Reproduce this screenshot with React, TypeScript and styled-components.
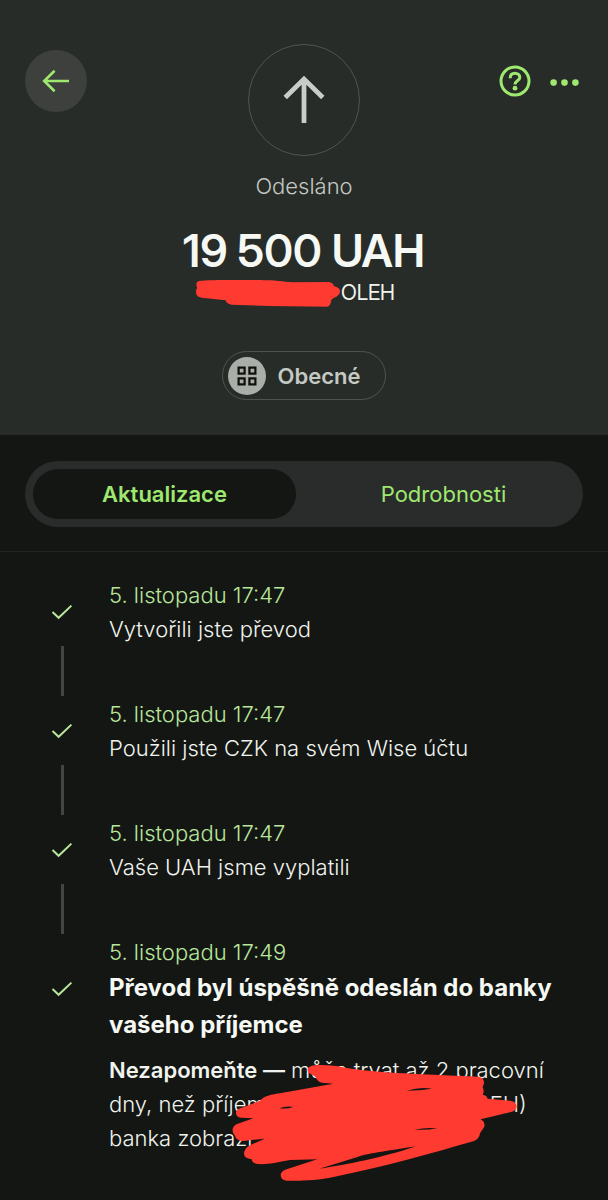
import React, { useState } from "react";
import styled, { createGlobalStyle } from "styled-components";

const color = {
  page: "#141613",
  header: "#282c28",
  accent: "#9fe870",
  date: "#b8e69c",
  text: "#f0f3ee",
  strong: "#f6f8f4",
  muted: "#c4c9c3",
  outline: "#505450",
  marker: "#ff3a31",
};

const displayFont = `"Inter Display", Inter, "Liberation Sans", sans-serif`;

const GlobalStyle = createGlobalStyle`
  *, *::before, *::after { box-sizing: border-box; }
  html { background: ${color.page}; }
  body {
    margin: 0;
    font-family: Inter, "Liberation Sans", sans-serif;
    font-size: 22px;
    font-weight: 300;
    line-height: 34px;
    color: ${color.text};
  }
  button { font: inherit; color: inherit; border: 0; padding: 0; background: none; cursor: pointer; }
  h1, h2, p, ol { margin: 0; padding: 0; }
  svg { display: block; }
`;

const Page = styled.main`
  min-height: 100vh;
  background: ${color.page};
`;

const Header = styled.header`
  display: flex;
  flex-direction: column;
  align-items: center;
  padding: 44px 25px 35px;
  background: ${color.header};
`;

const TopBar = styled.div`
  display: grid;
  grid-template-columns: 1fr auto 1fr;
  align-items: start;
  width: 100%;
`;

const BackButton = styled.button`
  display: grid;
  place-items: center;
  width: 62px;
  height: 62px;
  margin-top: 6px;
  border-radius: 50%;
  background: #3d403d;
`;

const Direction = styled.div`
  display: grid;
  place-items: center;
  width: 112px;
  height: 112px;
  border: 1px solid ${color.outline};
  border-radius: 50%;
`;

const Actions = styled.div`
  display: flex;
  align-items: center;
  justify-content: flex-end;
  gap: 14px;
  height: 62px;
  margin-top: 6px;
`;

const IconButton = styled.button`
  display: grid;
  place-items: center;
  width: 36px;
  height: 36px;
`;

const Status = styled.p`
  margin-top: 13px;
  color: ${color.muted};
`;

const Amount = styled.h1`
  margin-top: 19px;
  font-family: ${displayFont};
  font-size: 45px;
  line-height: 58px;
  font-weight: 600;
  color: ${color.strong};
`;

const Recipient = styled.p`
  position: relative;
  width: 182px;
  font-family: ${displayFont};
  font-size: 21px;
  font-weight: 400;
  line-height: 26px;
  text-align: right;
`;

const NameMark = styled.svg`
  position: absolute;
  left: -18px;
  top: -1px;
`;

const Category = styled.button`
  display: flex;
  align-items: center;
  gap: 12px;
  height: 49px;
  margin-top: 45px;
  padding: 0 25px 0 5px;
  border: 1px solid ${color.outline};
  border-radius: 25px;
  font-weight: 600;
  color: ${color.muted};
`;

const CategoryIcon = styled.span`
  display: grid;
  place-items: center;
  width: 38px;
  height: 38px;
  border-radius: 50%;
  background: #a9afa8;
`;

const TabBar = styled.div`
  padding: 26px 25px 24px;
  border-bottom: 1px solid #222422;
`;

const Tabs = styled.div`
  display: grid;
  grid-template-columns: 1fr 1fr;
  gap: 16px;
  padding: 8px;
  border-radius: 33px;
  background: #2a2c2b;
`;

const Tab = styled.button<{ $active: boolean }>`
  height: 50px;
  border-radius: 25px;
  background: ${(p) => (p.$active ? color.page : "transparent")};
  color: ${color.accent};
  font-weight: ${(p) => (p.$active ? 600 : 400)};
`;

const Timeline = styled.ol`
  padding: 26px 24px 44px;
  list-style: none;
`;

const Step = styled.li`
  display: grid;
  grid-template-columns: 76px 1fr;
  column-gap: 9px;
`;

const StepIcon = styled.span`
  display: grid;
  place-items: center;
`;

const StepDate = styled.p`
  color: ${color.date};
`;

const Connector = styled.span`
  grid-column: 1;
  justify-self: center;
  width: 3px;
  height: 50px;
  margin-bottom: 1px;
  background: #424542;
`;

const StepTitle = styled.h2`
  font-size: 24px;
  line-height: 37px;
  font-weight: 700;
  color: ${color.strong};
`;

const Note = styled.p`
  position: relative;
  grid-column: 2;
  margin-top: 10px;
  white-space: nowrap;
`;

const Strong = styled.strong`
  font-weight: 600;
`;

const Redacted = styled.span`
  display: inline-block;
  width: 195px;
`;

const NoteMark = styled.svg`
  position: absolute;
  left: 121px;
  top: 10px;
`;

const steps = [
  { date: "5. listopadu 17:47", text: "Vytvořili jste převod" },
  { date: "5. listopadu 17:47", text: "Použili jste CZK na svém Wise účtu" },
  { date: "5. listopadu 17:47", text: "Vaše UAH jsme vyplatili" },
];

const Check = () => (
  <StepIcon>
    <svg width="22" height="16" viewBox="0 0 22 16" fill="none" stroke={color.date} strokeWidth="2" aria-hidden="true">
      <path d="M1.5 8 L7.6 13.8 L20.4 1.6" />
    </svg>
  </StepIcon>
);

export default function App() {
  const [tab, setTab] = useState(0);
  return (
    <Page>
      <GlobalStyle />
      <Header>
        <TopBar>
          <BackButton aria-label="Zpět">
            <svg width="28" height="24" viewBox="0 0 28 24" fill="none" stroke={color.accent} strokeWidth="2.6">
              <path d="M27 12 H2.5 M12.6 1.8 L2.2 12 L12.6 22.2" />
            </svg>
          </BackButton>
          <Direction>
            <svg width="42" height="50" viewBox="0 0 42 50" fill="none" stroke="#c9ccc8" strokeWidth="4.8" aria-hidden="true">
              <path d="M21 48 V4 M2.2 22.5 L21 4 L39.8 22.5" />
            </svg>
          </Direction>
          <Actions>
            <IconButton aria-label="Nápověda">
              <svg width="32" height="32" viewBox="0 0 32 32" fill="none" stroke={color.accent} strokeWidth="3">
                <circle cx="16" cy="16" r="14" />
                <path d="M11.2 13.2 C11.2 10 13.2 8.3 16 8.3 C18.8 8.3 20.8 10 20.8 12.4 C20.8 15.6 16 15.4 16 19.6" />
                <circle cx="16" cy="23.2" r="2.4" fill={color.accent} stroke="none" />
              </svg>
            </IconButton>
            <IconButton aria-label="Další možnosti">
              <svg width="30" height="10" viewBox="0 0 30 10" fill={color.accent}>
                <circle cx="3.6" cy="6.6" r="3.3" />
                <circle cx="14.5" cy="6.6" r="3.3" />
                <circle cx="25.4" cy="6.6" r="3.3" />
              </svg>
            </IconButton>
          </Actions>
        </TopBar>
        <Status>Odesláno</Status>
        <Amount>19 500 UAH</Amount>
        <Recipient>
          OLEH
          <NameMark width="146" height="29" viewBox="105 190 438 87" fill={color.marker} aria-hidden="true">
            <path d="M118 196 C150 191 300 193 330 194 C370 197 390 200 400 200 L508 199 Q520 202 522 212 Q540 215 540 228 Q538 240 522 246 L514 252 Q512 272 500 273 L330 271 L215 267 Q200 265 197 254 L125 246 Q108 244 108 230 Q107 222 112 217 Q104 200 118 196 Z" />
          </NameMark>
        </Recipient>
        <Category>
          <CategoryIcon>
            <svg width="20" height="20" viewBox="0 0 20 20" fill="none" stroke="#0e0f0c" strokeWidth="2.2" aria-hidden="true">
              <rect x="1.6" y="1.6" width="6" height="6" />
              <rect x="12.4" y="1.6" width="6" height="6" />
              <rect x="1.6" y="12.4" width="6" height="6" />
              <rect x="12.4" y="12.4" width="6" height="6" />
            </svg>
          </CategoryIcon>
          Obecné
        </Category>
      </Header>
      <TabBar>
        <Tabs role="tablist">
          {["Aktualizace", "Podrobnosti"].map((label, i) => (
            <Tab key={label} role="tab" aria-selected={tab === i} $active={tab === i} onClick={() => setTab(i)}>
              {label}
            </Tab>
          ))}
        </Tabs>
      </TabBar>
      <Timeline>
        {steps.map((s) => (
          <Step key={s.text}>
            <Check />
            <div>
              <StepDate>{s.date}</StepDate>
              <p>{s.text}</p>
            </div>
            <Connector />
          </Step>
        ))}
        <Step>
          <Check />
          <div>
            <StepDate>5. listopadu 17:49</StepDate>
            <StepTitle>Převod byl úspěšně odeslán do banky vašeho příjemce</StepTitle>
          </div>
          <Note>
            <Strong>Nezapomeňte —</Strong> může trvat až 2 pracovní
            <br />
            dny, než příjem
            <Redacted />
            OLEH)
            <br />
            banka zobrazí
            <NoteMark width="288" height="120" viewBox="30 69 864 360" fill={color.marker} aria-hidden="true">
              <path d="M264 84 Q275 73 300 75 Q345 75 375 83 C440 94 540 100 640 104 L775 110 Q794 114 792 130 L788 142 Q794 155 788 164 Q800 166 803 176 L870 182 Q890 184 890 200 Q889 212 870 217 L782 238 Q796 246 793 260 L780 280 Q778 298 760 304 C640 338 500 380 330 413 C270 423 230 422 200 422 Q182 420 182 405 Q182 394 200 388 L292 358 L210 360 C170 368 140 374 112 372 Q96 370 95 358 Q72 356 72 340 Q74 324 90 316 L134 296 L70 303 Q48 302 45 287 Q36 280 38 266 Q42 254 58 250 L100 235 L64 233 Q47 232 48 217 Q52 205 70 202 L120 182 C130 170 150 164 180 160 L340 131 L306 128 Q290 124 287 110 L268 100 Q260 94 264 84 Z" />
              <path fill={color.page} d="M298 386 L415 350 C440 341 520 330 588 319 C520 343 400 372 298 386 Z M560 152 Q600 140 636 146 Q600 152 560 152 Z M582 269 Q620 261 652 265 Q620 271 582 269 Z M178 205 Q200 196 220 201 Q205 207 178 205 Z" />
            </NoteMark>
          </Note>
        </Step>
      </Timeline>
    </Page>
  );
}
